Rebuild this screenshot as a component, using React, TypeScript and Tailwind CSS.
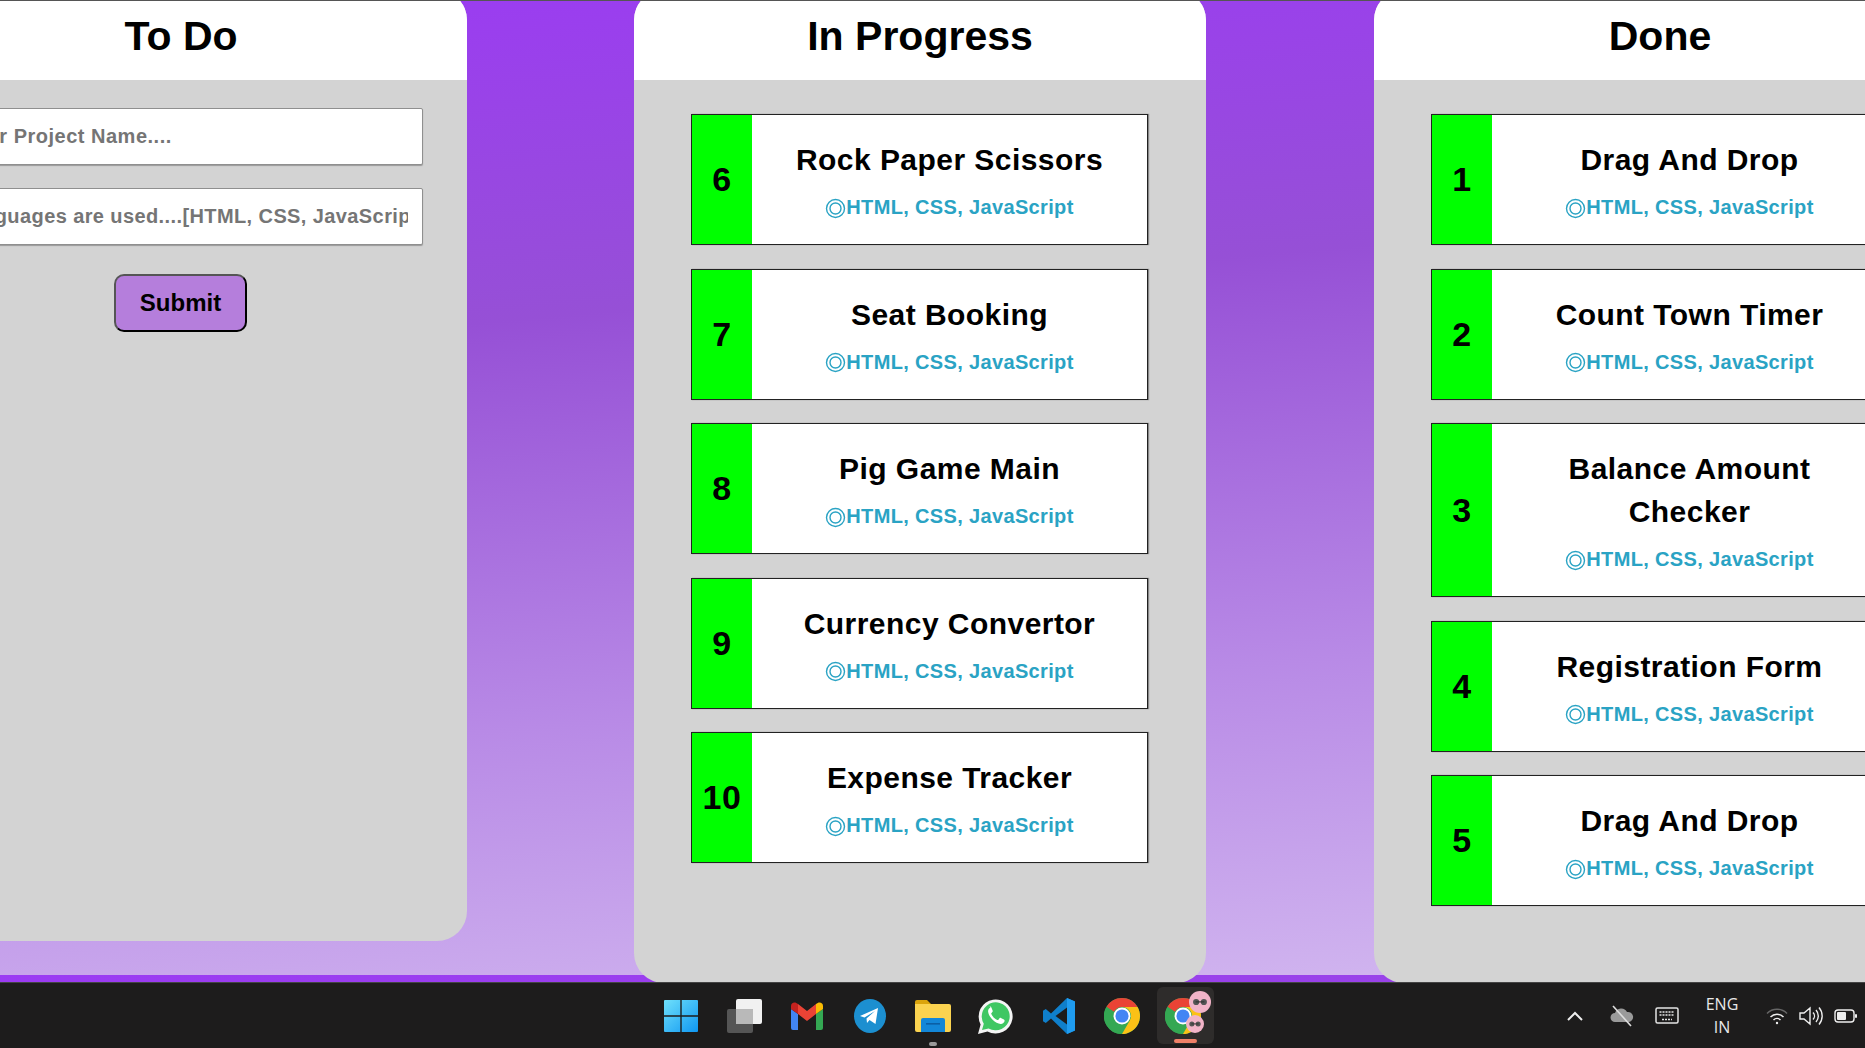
const font = "[font-family:'Liberation_Sans',Arial,sans-serif]"

const inProgress = [
  { id: 6, name: ['Rock Paper Scissors'] },
  { id: 7, name: ['Seat Booking'] },
  { id: 8, name: ['Pig Game Main'] },
  { id: 9, name: ['Currency Convertor'] },
  { id: 10, name: ['Expense Tracker'] },
]

const done = [
  { id: 1, name: ['Drag And Drop'] },
  { id: 2, name: ['Count Town Timer'] },
  { id: 3, name: ['Balance Amount', 'Checker'] },
  { id: 4, name: ['Registration Form'] },
  { id: 5, name: ['Drag And Drop'] },
]

function TaskCard({ id, name }: { id: number; name: string[] }) {
  return (
    <div className="flex w-[457px] shrink-0 border border-[#222] bg-white shadow-[1px_0_1px_#888]">
      <div className="flex w-[60px] shrink-0 items-center justify-center bg-[#00ff00] text-[34px] font-bold tracking-[0.5px] text-black">
        {id}
      </div>
      <div className="flex flex-1 flex-col items-center pb-[22px] pt-[23px]">
        {name.map((line) => (
          <div key={line} className="text-[30px] font-bold leading-[43px] tracking-[0.45px] text-black">
            {line}
          </div>
        ))}
        <div className="mt-[11px] flex h-[30px] items-center text-[20px] font-bold tracking-[0.35px] text-[#2aa3c4]">
          <svg width="21" height="21" viewBox="0 0 21 21" fill="none" stroke="#2aa3c4" className="mt-[2px]">
            <circle cx="10.5" cy="10.5" r="9" strokeWidth="1.4" />
            <circle cx="10.5" cy="10.5" r="5.5" strokeWidth="1.4" />
          </svg>
          HTML, CSS, JavaScript
        </div>
      </div>
    </div>
  )
}

function ColumnHeader({ title }: { title: string }) {
  return (
    <div className="flex h-[90px] shrink-0 items-center justify-center bg-white pt-[3px] text-[41px] font-bold text-black">
      {title}
    </div>
  )
}

function TaskColumn({ title, tasks }: { title: string; tasks: { id: number; name: string[] }[] }) {
  return (
    <section className="flex h-[993px] w-[572px] shrink-0 flex-col overflow-hidden rounded-[30px] bg-[#d3d3d3]">
      <ColumnHeader title={title} />
      <div className="flex flex-col gap-[23.5px] px-[57px] pt-[34px]">
        {tasks.map((t) => (
          <TaskCard key={t.id} id={t.id} name={t.name} />
        ))}
      </div>
    </section>
  )
}

function TodoColumn() {
  const inputCls =
    'h-[57px] w-[484px] rounded-[2px] border border-[#8f8f8f] bg-white pr-[14px] text-[20px] font-bold outline-none placeholder:text-[#757575] shadow-[0_1px_1px_#999]'
  return (
    <section className="-ml-[105px] -mr-px flex h-[951px] w-[572px] shrink-0 flex-col overflow-hidden rounded-[30px] bg-[#d3d3d3]">
      <ColumnHeader title="To Do" />
      <div className="flex flex-col items-center pt-[28px]">
        <input className={`${inputCls} pl-[14px] tracking-[0.5px]`} placeholder="Enter Project Name...." />
        <input
          className={`${inputCls} mt-[23px] pl-[18px] tracking-[0.4px]`}
          placeholder="Languages are used....[HTML, CSS, JavaScript]"
        />
        <button className="-ml-px mt-[29px] h-[58px] w-[133px] rounded-[10px] border-2 border-b-black border-l-[#555] border-r-black border-t-[#555] bg-[#b57edc] text-[24px] font-bold text-black">
          Submit
        </button>
      </div>
    </section>
  )
}

function WindowsLogo() {
  return (
    <svg width="34" height="34" viewBox="0 0 34 34">
      <defs>
        <linearGradient id="win" x1="0" y1="0" x2="1" y2="1">
          <stop offset="0" stopColor="#6fe0fb" />
          <stop offset="1" stopColor="#0f97f2" />
        </linearGradient>
      </defs>
      <path d="M1 1h15.3v15.3H0V2a1 1 0 0 1 1-1zM17.7 1H33a1 1 0 0 1 1 1v14.3H17.7zM0 17.7h16.3V33H1a1 1 0 0 1-1-1zM17.7 17.7H34V32a1 1 0 0 1-1 1H17.7z" fill="url(#win)" />
    </svg>
  )
}

function TaskView() {
  return (
    <svg width="36" height="34" viewBox="0 0 36 34">
      <rect x="1" y="10" width="26" height="24" rx="2" fill="#555" />
      <rect x="10" y="0" width="26" height="25" rx="2" fill="#f1f1f1" />
      <rect x="10" y="10" width="17" height="15" fill="#b9b9b9" />
    </svg>
  )
}

function Gmail() {
  return (
    <svg width="34" height="34" viewBox="0 0 34 34">
      <path d="M1 31V10l7 5v16H3a2 2 0 0 1-2-2z" fill="#4285f4" />
      <path d="M33 31V10l-7 5v16h5a2 2 0 0 0 2-2z" fill="#34a853" />
      <path d="M8 15 17 22 26 15V5l-9 7-9-7z" fill="#ea4335" />
      <path d="M1 10V7c0-3.5 4-5 7-2v10z" fill="#c5221f" />
      <path d="M33 10V7c0-3.5-4-5-7-2v10z" fill="#fbbc04" />
    </svg>
  )
}

function Telegram() {
  return (
    <svg width="32" height="34" viewBox="0 0 32 34">
      <ellipse cx="16" cy="17" rx="16" ry="17" fill="#1c8fd0" />
      <path d="M6 17 24 9 21.5 25 15.5 21 13 24 12.5 19.5 21 12 10.5 18.5z" fill="#fff" />
    </svg>
  )
}

function Folder() {
  return (
    <svg width="36" height="34" viewBox="0 0 36 34">
      <path d="M0 3a2 2 0 0 1 2-2h10l4 4H0z" fill="#dba40c" />
      <path d="M0 5h34a2 2 0 0 1 2 2v24a2 2 0 0 1-2 2H2a2 2 0 0 1-2-2z" fill="#fbd350" />
      <path d="M6 23h24v-2a2 2 0 0 0-2-2H8a2 2 0 0 0-2 2zM6 23h24v10H6z" fill="#1387d8" />
      <rect x="11" y="24" width="14" height="1.6" fill="#0b5fa5" />
    </svg>
  )
}

function WhatsApp() {
  return (
    <svg width="36" height="36" viewBox="0 0 36 36">
      <path d="M0 36 2.6 26.4A17 17 0 1 1 9.5 33.4z" fill="#f4f4f4" />
      <path d="M4 32 5.8 25.7A14 14 0 1 1 10.6 30.4z" fill="#3fc763" />
      <path d="M12.5 9.5c-1 .2-2.6 2-2.4 4 .3 3 2.3 6 4.5 8.2 2.6 2.4 5.5 4 8 4.2 2 .1 3.8-1.6 4-3 .1-.7-.2-1.1-.7-1.4l-3-1.5c-.6-.3-1-.2-1.4.3l-1.1 1.4c-.3.3-.6.4-1.1.2-2.6-1-5-3.4-6-5.8-.2-.5 0-.8.3-1.1l.9-1.2c.3-.4.3-.8.1-1.2l-1.2-3c-.3-.8-.7-1.2-1.9-1.1z" fill="#fff" />
    </svg>
  )
}

function VsCode() {
  return (
    <svg width="36" height="36" viewBox="0 0 32 36">
      <path d="M24 0 32 3.5V32.5L24 36 8 20.5 2.8 25 0 23.3V12.7L2.8 11 8 15.5z" fill="#0f7fcb" />
      <path d="M24 9.5 12.5 18 24 26.5z" fill="#1c1c1c" />
      <path d="M24 0 32 3.5V32.5L24 36z" fill="#1f9cf0" />
    </svg>
  )
}

function Chrome({ size = 36 }: { size?: number }) {
  return (
    <svg width={size} height={size} viewBox="0 0 34 34">
      <circle cx="17" cy="17" r="17" fill="#34a853" />
      <path d="M17 0A17 17 0 0 1 31.7 8.5H17A8.5 8.5 0 0 0 9.5 13L2.4 8.3A17 17 0 0 1 17 0z" fill="#ea4335" />
      <path d="M2.4 8.3 9.8 21.5 17 34A17 17 0 0 1 2.4 8.3z" fill="#34a853" />
      <path d="M31.7 8.5A17 17 0 0 1 17 34L24.4 21.2A8.5 8.5 0 0 0 24.4 12.8 8.5 8.5 0 0 0 17 8.5z" fill="#fbc116" />
      <circle cx="17" cy="17" r="8" fill="#fff" />
      <circle cx="17" cy="17" r="6.2" fill="#4285f4" />
    </svg>
  )
}

function Pig({ r }: { r: number }) {
  return (
    <svg width={r * 2} height={r * 2} viewBox="0 0 20 20" className="block">
      <circle cx="10" cy="10" r="10" fill="#f2b4c8" />
      <circle cx="6.5" cy="10" r="2.8" fill="#555" />
      <circle cx="13.5" cy="10" r="2.8" fill="#555" />
      <rect x="6" y="9.4" width="8" height="1" fill="#333" />
    </svg>
  )
}

function ProfileChrome() {
  return (
    <div className="relative flex h-[57px] w-[57px] items-center justify-center rounded-[6px] bg-[#2e2c2b]">
      <div className="-ml-[5px]">
        <Chrome size={36} />
      </div>
      <div className="absolute right-[3px] top-[4px]">
        <Pig r={11} />
      </div>
      <div className="absolute right-[10px] top-[28px]">
        <Pig r={9} />
      </div>
      <div className="absolute bottom-[1px] left-[17px] h-[4px] w-[23px] rounded-full bg-[#f08068]" />
    </div>
  )
}

function Tray() {
  return (
    <div className="flex items-center justify-end pr-[7px] text-[#e8e8e8]">
      <svg width="18" height="12" viewBox="0 0 18 12" fill="none" stroke="#eee" strokeWidth="2" className="mr-[26px]">
        <path d="M2 10l7-7 7 7" />
      </svg>
      <svg width="24" height="22" viewBox="0 0 24 22" className="mr-[21px]">
        <path d="M5 17a4.5 4.5 0 0 1 0-9 6.5 6.5 0 0 1 12-1 5 5 0 0 1 2 10z" fill="#9a9a9a" />
        <path d="M3 1l18 20" stroke="#ddd" strokeWidth="1.6" />
      </svg>
      <svg width="24" height="18" viewBox="0 0 24 18" fill="none" className="mr-[24px]">
        <rect x="1" y="1" width="22" height="15" rx="1.5" stroke="#e4e4e4" strokeWidth="1.5" />
        <path d="M4.5 5h15M4.5 8h15M7 12.5h10" stroke="#e4e4e4" strokeWidth="1.6" strokeDasharray="2 1" />
      </svg>
      <div className="mr-[25px] w-[38px] text-center text-[16px] leading-[23px] [font-family:'Open_Sans',sans-serif]">
        <div>ENG</div>
        <div>IN</div>
      </div>
      <svg width="22" height="18" viewBox="0 0 22 18" fill="none" stroke="#eee" strokeWidth="1.5" className="mr-[11px]">
        <path d="M1 6.5a14 14 0 0 1 20 0" stroke="#666" />
        <path d="M4.5 10a9 9 0 0 1 13 0" />
        <path d="M7.5 13a5 5 0 0 1 7 0" />
        <circle cx="11" cy="16" r="1.2" fill="#eee" stroke="none" />
      </svg>
      <svg width="24" height="22" viewBox="0 0 24 22" fill="none" stroke="#eee" strokeWidth="1.4" className="mr-[11px]">
        <path d="M1 8h4l6-5v16l-6-5H1z" />
        <path d="M14 7.5a5 5 0 0 1 0 7M17 5a9 9 0 0 1 0 12M20 2.5a13 13 0 0 1 0 17" />
      </svg>
      <svg width="24" height="14" viewBox="0 0 24 14" fill="none">
        <rect x="1" y="1" width="19" height="12" rx="3" stroke="#eee" strokeWidth="1.4" />
        <rect x="3" y="3" width="9" height="8" rx="1" fill="#eee" />
        <rect x="21" y="5" width="2" height="4" rx="1" fill="#eee" />
      </svg>
    </div>
  )
}

function Taskbar() {
  const icons = [WindowsLogo, TaskView, Gmail, Telegram, Folder, WhatsApp, VsCode, Chrome]
  return (
    <footer className="grid h-[66px] shrink-0 grid-cols-[649px_auto_1fr] items-center border-t border-[#444] bg-[#1d1c1c]">
      <div />
      <div className="flex items-center">
        {icons.map((Icon, i) => (
          <div key={i} className="relative flex h-[57px] w-[63px] items-center justify-center">
            <Icon />
            {i === 4 && <div className="absolute -bottom-[2px] left-[28px] h-[4px] w-[8px] rounded-full bg-[#9a9a9a]" />}
          </div>
        ))}
        <div className="ml-[4px]">
          <ProfileChrome />
        </div>
      </div>
      <Tray />
    </footer>
  )
}

export default function App() {
  return (
    <div className={`flex h-screen w-full flex-col overflow-hidden ${font}`}>
      <div className="h-px shrink-0 bg-[#555]" />
      <main className="flex flex-1 items-start overflow-hidden bg-[linear-gradient(175deg,#9b3bf3_0%,#9650d6_32%,#b88ae6_68%,#d3b9f0_100%)] bg-[length:100%_974px] bg-repeat">
        <div className="-mt-[11px] flex gap-[168px]">
          <TodoColumn />
          <TaskColumn title="In Progress" tasks={inProgress} />
          <TaskColumn title="Done" tasks={done} />
        </div>
      </main>
      <Taskbar />
    </div>
  )
}
